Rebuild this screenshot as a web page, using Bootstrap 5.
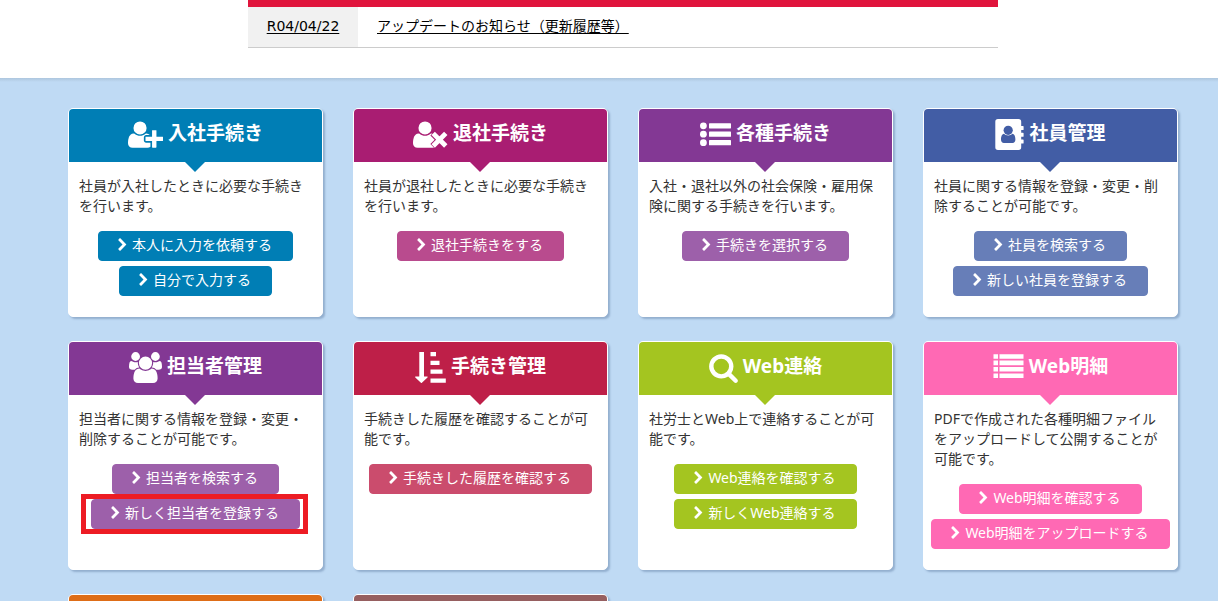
<!DOCTYPE html>
<html lang="ja">
<head>
<meta charset="utf-8">
<meta name="viewport" content="width=device-width, initial-scale=1">
<title>手続きメニュー</title>
<link href="https://cdn.jsdelivr.net/npm/bootstrap@5.3.0/dist/css/bootstrap.min.css" rel="stylesheet">
<style>
body { font-family: "Noto Sans", "Noto Sans CJK JP", sans-serif; font-size: 14px; line-height: 20px; color: #333; padding-left: 28px; background: #fff; }
.news { max-width: 750px; border-top: 7px solid #e0143c; margin-bottom: 30px; }
.news-row { border-bottom: 1px solid #ccc; }
.news a { color: #000; text-underline-offset: 2px; }
.news-date { width: 110px; padding: 9px 0 11px; background: #f1f1f1; font-family: "DejaVu Sans", sans-serif; }
.news-title { padding: 9px 19px 11px; }
.menu { margin-left: -28px; padding: 30px 0 30px 28px; background: #bfdaf4 linear-gradient(#adc6de, #bfdaf4) top / 100% 4px no-repeat; }
.menu .row, .menu .container { --bs-gutter-x: 30px; }
.panel { border: 1px solid #fff; border-radius: 5px; background: #fff; box-shadow: 2px 2px 2px rgba(80, 110, 150, .4); }
.panel-head { position: relative; height: 53px; padding: 10px 0 12px; background: var(--main); color: #fff; border-radius: 4px 4px 0 0; gap: 5px; }
.panel-head h2 { font-size: 19px; line-height: 26px; font-weight: 700; margin: 0 0 4px; }
.panel-head.pointed::after { content: ""; position: absolute; top: 100%; left: 50%; margin-left: -11px; border: 10px solid transparent; border-top-color: var(--main); border-bottom: 0; }
.panel-head svg { height: 31px; fill: currentColor; flex: none; }
.panel-text { padding: 14px 10px 15px; margin: 0; }
.actions { gap: 5px; padding-bottom: 20px; }
.act { --bs-btn-color: #fff; --bs-btn-bg: var(--soft); --bs-btn-border-color: var(--soft); --bs-btn-hover-color: #fff; --bs-btn-hover-bg: var(--main); --bs-btn-hover-border-color: var(--main);
  --bs-btn-font-size: 14px; --bs-btn-line-height: 20px; --bs-btn-border-radius: 4px; padding: 3px 20px 5px 19px; position: relative; gap: 4px; white-space: nowrap; }
.act svg { width: 10px; height: 14px; fill: currentColor; flex: none; }
.act.picked::after { content: ""; position: absolute; inset: -6px -9px -6px -11px; border: 5px solid #ed1c24; }
.c-blue { --main: #007eb5; --soft: #007eb5; }
.c-magenta { --main: #a91d72; --soft: #b94b8e; }
.c-purple { --main: #833894; --soft: #9d60aa; }
.c-navy { --main: #425da5; --soft: #677eb8; }
.c-red { --main: #be1f48; --soft: #cb4c6d; }
.c-green { --main: #a4c520; --soft: #a4c520; }
.c-pink { --main: #ff69b4; --soft: #ff69b4; }
.c-orange { --main: #de6d17; }
.c-brown { --main: #965f60; }
</style>
</head>
<body class="vh-100 overflow-hidden">
<svg class="d-none" xmlns="http://www.w3.org/2000/svg">
  <symbol id="chev" viewBox="320 0 1280 1792"><path d="M1363 877l-742 742q-19 19-45 19t-45-19l-166-166q-19-19-19-45t19-45l531-531-531-531q-19-19-19-45t19-45l166-166q19-19 45-19t45 19l742 742q19 19 19 45t-19 45z"/></symbol>
</svg>

<section class="news mx-auto">
  <div class="news-row d-flex">
    <div class="news-date text-center"><a href="#">R04/04/22</a></div>
    <div class="news-title"><a href="#">アップデートのお知らせ（更新履歴等）</a></div>
  </div>
</section>

<main class="menu">
  <div class="container">
    <div class="row">
      <div class="col-3">
        <section class="panel c-blue h-100">
          <div class="panel-head pointed d-flex justify-content-center align-items-center">
            <svg width="35" viewBox="0 0 2048 1792"><path d="M704 896q-159 0-271.5-112.5t-112.5-271.5 112.5-271.5 271.5-112.5 271.5 112.5 112.5 271.5-112.5 271.5-271.5 112.5zm960 128h352q13 0 22.5 9.5t9.5 22.5v192q0 13-9.5 22.5t-22.5 9.5h-352v352q0 13-9.5 22.5t-22.5 9.5h-192q-13 0-22.5-9.5t-9.5-22.5v-352h-352q-13 0-22.5-9.5t-9.5-22.5v-192q0-13 9.5-22.5t22.5-9.5h352v-352q0-13 9.5-22.5t22.5-9.5h192q13 0 22.5 9.5t9.5 22.5v352zm-736 224q0 52 38 90t90 38h256v238q-68 50-171 50h-874q-121 0-194-69t-73-190q0-53 3.5-103.5t14-109 26.5-108.5 43-97.5 62-81 85.5-53.5 111.5-20q19 0 39 17 79 61 154.5 91.5t164.5 30.5 164.5-30.5 154.5-91.5q20-17 39-17 132 0 217 96h-223q-52 0-90 38t-38 90v192z"/></svg>
            <h2>入社手続き</h2>
          </div>
          <p class="panel-text">社員が入社したときに必要な手続きを行います。</p>
          <div class="actions d-flex flex-column align-items-center">
            <button type="button" class="act btn d-flex align-items-center"><svg><use href="#chev"/></svg>本人に入力を依頼する</button>
            <button type="button" class="act btn d-flex align-items-center"><svg><use href="#chev"/></svg>自分で入力する</button>
          </div>
        </section>
      </div>

      <div class="col-3">
        <section class="panel c-magenta h-100">
          <div class="panel-head pointed d-flex justify-content-center align-items-center">
            <svg width="35" viewBox="0 0 2048 1792"><circle cx="704" cy="512" r="384"/><path d="M267 1664q-121 0-194-69t-73-190q0-53 3.500-103.500t14-109 26.500-108.500 43-97.500 62-81 85.500-53.500 111.500-20q19 0 39 17 79 61 154.500 91.500t164.500 30.500 164.500-30.500 154.500-91.500q20-17 39-17 260 0 320 400v250q-68 182-241 182z"/><path d="M1300 952l498 498M1798 952l-498 498" fill="none" stroke="var(--main)" stroke-width="400" stroke-linecap="square"/><path d="M1280 932l538 538M1818 932l-538 538" fill="none" stroke="currentColor" stroke-width="280" stroke-linecap="square"/></svg>
            <h2>退社手続き</h2>
          </div>
          <p class="panel-text">社員が退社したときに必要な手続きを行います。</p>
          <div class="actions d-flex flex-column align-items-center">
            <button type="button" class="act btn d-flex align-items-center"><svg><use href="#chev"/></svg>退社手続きをする</button>
          </div>
        </section>
      </div>

      <div class="col-3">
        <section class="panel c-purple h-100">
          <div class="panel-head pointed d-flex justify-content-center align-items-center">
            <svg width="31" viewBox="0 0 31 31"><circle cx="3.400" cy="6.800" r="3.400"/><circle cx="3.400" cy="15.200" r="3.400"/><circle cx="3.400" cy="23.700" r="3.400"/><rect x="9" y="4.200" width="22" height="5.200" rx=".6"/><rect x="9" y="12.600" width="22" height="5.200" rx=".6"/><rect x="9" y="21.100" width="22" height="5.200" rx=".6"/></svg>
            <h2>各種手続き</h2>
          </div>
          <p class="panel-text">入社・退社以外の社会保険・雇用保険に関する手続きを行います。</p>
          <div class="actions d-flex flex-column align-items-center">
            <button type="button" class="act btn d-flex align-items-center"><svg><use href="#chev"/></svg>手続きを選択する</button>
          </div>
        </section>
      </div>

      <div class="col-3">
        <section class="panel c-navy h-100">
          <div class="panel-head pointed d-flex justify-content-center align-items-center">
            <svg width="29" viewBox="0 0 29 31"><path d="M3 0h20.500a2.700 2.700 0 0 1 2.700 2.700V7h1.800a.6.6 0 0 1 .6.6v2.800a.6.6 0 0 1-.6.600h-1.800v2.800h1.800a.6.6 0 0 1 .6.600v2.800a.6.6 0 0 1-.6.600h-1.800v2.700h1.800a.6.6 0 0 1 .6.600v2.800a.6.6 0 0 1-.6.600h-1.800v3.800a2.700 2.700 0 0 1-2.700 2.700H3a2.700 2.700 0 0 1-2.700-2.700V2.700A2.700 2.700 0 0 1 3 0z"/><circle cx="13.200" cy="11.300" r="4.600" fill="var(--main)"/><path d="M9 14.700c1.200 1 2.600 1.700 4.200 1.700s3-.7 4.200-1.700c2.300.4 3 3.200 3 5.700 0 2.200-1.200 3.500-2.800 3.500H8.800c-1.600 0-2.800-1.300-2.800-3.500 0-2.500.700-5.300 3-5.700z" fill="var(--main)"/></svg>
            <h2>社員管理</h2>
          </div>
          <p class="panel-text">社員に関する情報を登録・変更・削除することが可能です。</p>
          <div class="actions d-flex flex-column align-items-center">
            <button type="button" class="act btn d-flex align-items-center"><svg><use href="#chev"/></svg>社員を検索する</button>
            <button type="button" class="act btn d-flex align-items-center"><svg><use href="#chev"/></svg>新しい社員を登録する</button>
          </div>
        </section>
      </div>

      <div class="col-3 mt-4">
        <section class="panel c-purple h-100">
          <div class="panel-head pointed d-flex justify-content-center align-items-center">
            <svg width="33" viewBox="0 0 1920 1792"><path d="M593 896q-162 5-265 128h-134q-82 0-138-40.500t-56-118.500q0-353 124-353 6 0 43.500 21t97.500 42.500 119 21.500q67 0 133-23-5 37-5 66 0 139 81 256zm1071 637q0 120-73 189.500t-194 69.500h-874q-121 0-194-69.500t-73-189.500q0-53 3.500-103.500t14-109 26.500-108.500 43-97.500 62-81 85.500-53.500 111.500-20q10 0 43 21.500t73 48 107 48 135 21.500 135-21.500 107-48 73-48 43-21.500q61 0 111.500 20t85.500 53.500 62 81 43 97.500 26.500 108.500 14 109 3.500 103.500zm-1024-1277q0 106-75 181t-181 75-181-75-75-181 75-181 181-75 181 75 75 181zm704 384q0 159-112.500 271.500t-271.500 112.500-271.500-112.500-112.500-271.500 112.500-271.500 271.500-112.500 271.500 112.500 112.500 271.500zm576 225q0 78-56 118.500t-138 40.500h-134q-103-123-265-128 81-117 81-256 0-29-5-66 66 23 133 23 59 0 119-21.500t97.500-42.500 43.500-21q124 0 124 353zm-128-609q0 106-75 181t-181 75-181-75-75-181 75-181 181-75 181 75 75 181z"/></svg>
            <h2>担当者管理</h2>
          </div>
          <p class="panel-text">担当者に関する情報を登録・変更・削除することが可能です。</p>
          <div class="actions d-flex flex-column align-items-center">
            <button type="button" class="act btn d-flex align-items-center"><svg><use href="#chev"/></svg>担当者を検索する</button>
            <button type="button" class="act picked btn d-flex align-items-center"><svg><use href="#chev"/></svg>新しく担当者を登録する</button>
          </div>
        </section>
      </div>

      <div class="col-3 mt-4">
        <section class="panel c-red h-100">
          <div class="panel-head pointed d-flex justify-content-center align-items-center">
            <svg width="31" viewBox="0 0 31 31"><path d="M4.300 0h4.700v24.500h3.100q1 0 .4.900L6.900 30.800q-.5.400-1 0L.3 25.400q-.700-.9.400-.9h3.600zM15.500 0h5.500v4.200h-5.500zM15.500 8.800h9V13h-9zM15.500 17.500h12v4.200h-12zM15.500 26.500h15.300v4.300H15.500z"/></svg>
            <h2>手続き管理</h2>
          </div>
          <p class="panel-text">手続きした履歴を確認することが可能です。</p>
          <div class="actions d-flex flex-column align-items-center">
            <button type="button" class="act btn d-flex align-items-center"><svg><use href="#chev"/></svg>手続きした履歴を確認する</button>
          </div>
        </section>
      </div>

      <div class="col-3 mt-4">
        <section class="panel c-green h-100">
          <div class="panel-head pointed d-flex justify-content-center align-items-center">
            <svg width="29" viewBox="64 0 1664 1792"><path d="M1216 832q0-185-131.500-316.500t-316.500-131.500-316.500 131.500-131.500 316.500 131.500 316.500 316.500 131.500 316.500-131.500 131.500-316.500zm512 832q0 52-38 90t-90 38q-54 0-90-38l-343-342q-179 124-399 124-143 0-273.500-55.500t-225-150-150-225-55.500-273.500 55.500-273.500 150-225 225-150 273.500-55.500 273.500 55.500 225 150 150 225 55.500 273.500q0 220-124 399l343 343q37 37 37 90z"/></svg>
            <h2>Web連絡</h2>
          </div>
          <p class="panel-text">社労士とWeb上で連絡することが可能です。</p>
          <div class="actions d-flex flex-column align-items-center">
            <button type="button" class="act btn d-flex align-items-center"><svg><use href="#chev"/></svg>Web連絡を確認する</button>
            <button type="button" class="act btn d-flex align-items-center"><svg><use href="#chev"/></svg>新しくWeb連絡する</button>
          </div>
        </section>
      </div>

      <div class="col-3 mt-4">
        <section class="panel c-pink h-100">
          <div class="panel-head pointed d-flex justify-content-center align-items-center">
            <svg width="31" viewBox="0 0 31 31"><path d="M.5 2.200H5v4.600H.5zM6.500 2.200h24v4.600h-24zM.5 8.600H5v4.600H.5zM6.500 8.600h24v4.600h-24zM.5 15H5v4.600H.5zM6.500 15h24v4.600h-24zM.5 21.400H5V26H.5zM6.500 21.400h24V26h-24z"/></svg>
            <h2>Web明細</h2>
          </div>
          <p class="panel-text">PDFで作成された各種明細ファイルをアップロードして公開することが可能です。</p>
          <div class="actions d-flex flex-column align-items-center">
            <button type="button" class="act btn d-flex align-items-center"><svg><use href="#chev"/></svg>Web明細を確認する</button>
            <button type="button" class="act btn d-flex align-items-center"><svg><use href="#chev"/></svg>Web明細をアップロードする</button>
          </div>
        </section>
      </div>

      <div class="col-3 mt-4"><section class="panel c-orange"><div class="panel-head"></div></section></div>
      <div class="col-3 mt-4"><section class="panel c-brown"><div class="panel-head"></div></section></div>
    </div>
  </div>
</main>
<script src="https://cdn.jsdelivr.net/npm/bootstrap@5.3.0/dist/js/bootstrap.bundle.min.js"></script>
</body>
</html>
